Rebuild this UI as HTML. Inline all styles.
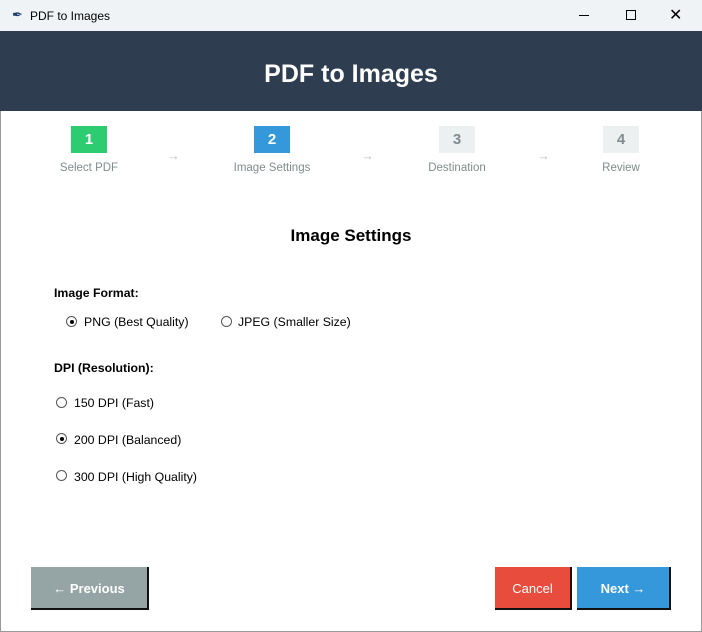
<!DOCTYPE html>
<html><head><style>
*{margin:0;padding:0;box-sizing:border-box}
body{width:702px;height:632px;background:#fff;font-family:"Liberation Sans",sans-serif;position:relative;overflow:hidden}
.abs{position:absolute}
.tb{left:0;top:0;width:702px;height:31px;background:#eff3f6}
.hdr{left:0;top:31px;width:702px;height:80px;background:#2e3d50;color:#fff;font-weight:bold;font-size:25px;text-align:center;line-height:86px}
.box{width:36px;height:27px;top:126px;text-align:center;line-height:28px;font-weight:bold;font-size:15px}
.lbl{top:162px;font-size:11.5px;color:#7f8c8d;text-align:center;width:120px}
.arr{top:148px;font-size:13px;color:#bdc3c7}
.t{font-size:12.3px;color:#000}
.rad{width:11px;height:11px;border-radius:50%;border:1px solid #555;background:#fff}
.rad.on::after{content:"";position:absolute;left:2.5px;top:2.5px;width:4px;height:4px;border-radius:50%;background:#000}
.btn{top:567px;height:43px;color:#fff;font-size:13px;text-align:center;line-height:43px;border-right:2px solid #111;border-bottom:2px solid #111}
</style></head><body>
<div class="abs tb"></div>
<div class="abs" style="left:12px;top:7px;font-size:13px;color:#1a3a6a">&#x2712;</div>
<div class="abs" style="left:30px;top:9px;font-size:12px">PDF to Images</div>
<div class="abs" style="left:579px;top:15px;width:10px;height:1px;background:#000"></div>
<div class="abs" style="left:626px;top:10px;width:10px;height:10px;border:1px solid #000"></div>
<div class="abs" style="left:669px;top:5px;font-size:16px">&#x2715;</div>
<div class="abs hdr">PDF to Images</div>
<div class="abs" style="left:0;top:111px;width:1px;height:521px;background:#999"></div>
<div class="abs" style="left:701px;top:111px;width:1px;height:521px;background:#999"></div>
<div class="abs" style="left:0;top:631px;width:702px;height:1px;background:#999"></div>

<div class="abs box" style="left:71px;background:#2ecc71;color:#fff">1</div>
<div class="abs box" style="left:254px;background:#3498db;color:#fff">2</div>
<div class="abs box" style="left:439px;background:#ecf0f1;color:#7f8c8d">3</div>
<div class="abs box" style="left:603px;background:#ecf0f1;color:#7f8c8d">4</div>
<div class="abs lbl" style="left:29px">Select PDF</div>
<div class="abs lbl" style="left:212px">Image Settings</div>
<div class="abs lbl" style="left:397px">Destination</div>
<div class="abs lbl" style="left:561px">Review</div>
<div class="abs arr" style="left:167px">&#x2192;</div>
<div class="abs arr" style="left:361px">&#x2192;</div>
<div class="abs arr" style="left:537px">&#x2192;</div>

<div class="abs" style="left:0;top:226px;width:702px;text-align:center;font-size:17px;font-weight:bold">Image Settings</div>
<div class="abs t" style="left:54px;top:286px;font-weight:bold">Image Format:</div>
<div class="abs rad on" style="left:66px;top:316px"></div>
<div class="abs t" style="left:84px;top:315px">PNG (Best Quality)</div>
<div class="abs rad" style="left:221px;top:316px"></div>
<div class="abs t" style="left:238px;top:315px">JPEG (Smaller Size)</div>
<div class="abs t" style="left:54px;top:361px;font-weight:bold">DPI (Resolution):</div>
<div class="abs rad" style="left:56px;top:397px"></div>
<div class="abs t" style="left:74px;top:396px">150 DPI (Fast)</div>
<div class="abs rad on" style="left:56px;top:433px"></div>
<div class="abs t" style="left:74px;top:433px">200 DPI (Balanced)</div>
<div class="abs rad" style="left:56px;top:470px"></div>
<div class="abs t" style="left:74px;top:470px">300 DPI (High Quality)</div>

<div class="abs btn" style="left:31px;width:118px;background:#95a5a6;font-weight:bold">&#x2190; Previous</div>
<div class="abs btn" style="left:495px;width:77px;background:#e74c3c">Cancel</div>
<div class="abs btn" style="left:577px;width:94px;background:#3498db;font-weight:bold">Next &#x2192;</div>
</body></html>
